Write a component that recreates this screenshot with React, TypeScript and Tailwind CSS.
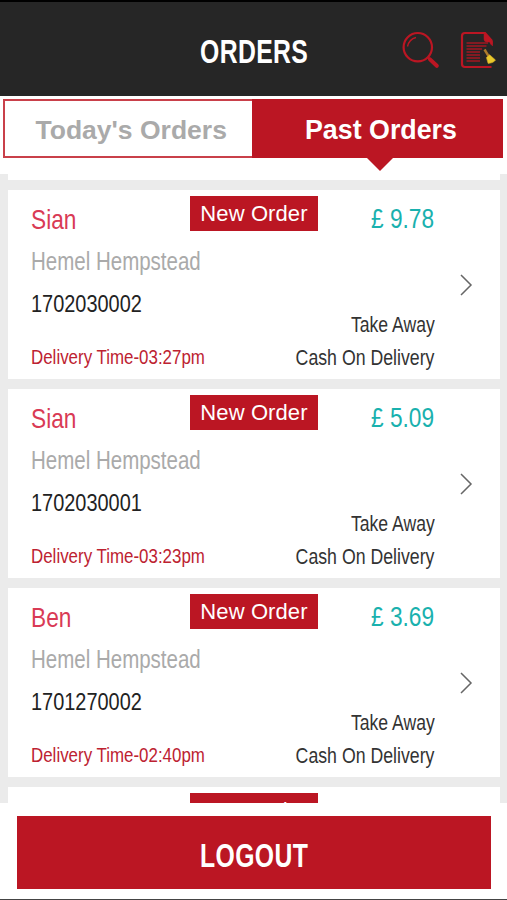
type Order = { id: string; name: string; town: string; price: string; time: string };

const orders: Order[] = [
  { id: "1702030002", name: "Sian", town: "Hemel Hempstead", price: "£ 9.78", time: "03:27pm" },
  { id: "1702030001", name: "Sian", town: "Hemel Hempstead", price: "£ 5.09", time: "03:23pm" },
  { id: "1701270002", name: "Ben", town: "Hemel Hempstead", price: "£ 3.69", time: "02:40pm" },
];

function SearchIcon() {
  return (
    <svg width="38" height="39" viewBox="0 0 38 39" fill="none" stroke="#bb1623">
      <circle cx="15.8" cy="17.2" r="14.2" strokeWidth="2.2" />
      <path d="M5.5 16.5C6.5 12 9.5 8.6 14 7.5" strokeWidth="1.4" />
      <path d="M25.5 27l2.5 2.3" strokeWidth="2.2" />
      <path d="M28 29.4l6.8 6.4" strokeWidth="4" strokeLinecap="round" />
    </svg>
  );
}

function ClearListIcon() {
  return (
    <svg width="36" height="39" viewBox="0 0 36 39" fill="none" stroke="#bb1623">
      <path d="M31.5 37H5a3 3 0 0 1-3-3V6a3 3 0 0 1 3-3h20l6.500 7.500v4" strokeWidth="2.2" />
      <path d="M24 3v6a3 3 0 0 0 3 3h2.500l3 4V11.500L25.500 3z" fill="#bb1623" strokeWidth="0.5" />
      <path d="M6.500 13h21.500M6.500 16h20M6.500 19h15.500M6.500 22h13.500M6.500 25h13.500M6.500 28h13.500M6.500 31h13.500" stroke="#a31722" strokeWidth="1.5" />
      <path d="M24.500 19.500l4 6.500" stroke="#ad7c2b" strokeWidth="2.400" />
      <path d="M26.400 27.500l3.200-2.800 5.900 5.300c-1.600 2.200-4 3.200-7.400 3.400z" fill="#e8c92c" stroke="#d1a823" strokeWidth="0.600" />
    </svg>
  );
}

function Badge() {
  return (
    <div className="mt-[6px] h-[35px] w-[128px] shrink-0 bg-[#bb1623] text-center text-[22px] leading-[36px] tracking-[0.1px] whitespace-nowrap text-white">
      New Order
    </div>
  );
}

function OrderCard({ order }: { order: Order }) {
  return (
    <article className="flex h-[189px] shrink-0 bg-white pl-[23px] whitespace-nowrap">
      <div className="flex w-[159px] shrink-0 flex-col items-start pt-[9.5px]">
        <h2 className="origin-left scale-x-[0.81] text-[28px] leading-10 text-[#d93a55]">{order.name}</h2>
        <p className="origin-left scale-x-[0.82] text-[25px] leading-[42px] text-[#aaaaaa]">{order.town}</p>
        <p className="origin-left scale-x-[0.83] text-[24px] leading-[44px] text-[#222222]">{order.id}</p>
        <p className="mt-[19px] origin-left scale-x-[0.825] text-[20.5px] leading-6 text-[#bd2231]">Delivery Time-{order.time}</p>
      </div>
      <Badge />
      <div className="flex w-[117px] shrink-0 flex-col items-end pt-[9px]">
        <p className="mr-px origin-right scale-x-[0.84] text-[27px] leading-10 text-[#19b1ae]">{order.price}</p>
        <p className="mt-[69px] origin-right scale-x-[0.8] text-[22px] leading-[33px] text-[#333333]">Take Away</p>
        <p className="mr-px origin-right scale-x-[0.805] text-[22px] leading-[33px] text-[#333333]">Cash On Delivery</p>
      </div>
      <svg className="mt-[84px] ml-[24px]" width="14" height="22" viewBox="0 0 14 22" fill="none" stroke="#666666" strokeWidth="1.5">
        <path d="M2 1l10 10L2 21" />
      </svg>
    </article>
  );
}

export default function App() {
  return (
    <div className="flex h-[900px] w-[507px] flex-col overflow-hidden bg-white font-['Liberation_Sans',Arial,sans-serif]">
      <header className="flex h-24 shrink-0 items-start border-t-2 border-black bg-[#262626]">
        <div className="w-[402px] shrink-0 pt-[30px] pl-[106px] text-center">
          <h1 className="inline-block scale-x-[0.75] text-[33px] leading-10 font-bold tracking-[0.5px] text-white">ORDERS</h1>
        </div>
        <div className="flex gap-[20px] pt-[28px]">
          <SearchIcon />
          <ClearListIcon />
        </div>
      </header>

      <nav className="flex h-[78px] shrink-0 px-[3px] pt-[3px] whitespace-nowrap">
        <div className="h-[59px] w-[249px] border-2 border-r-0 border-[#c9404a] pl-[30.5px] text-[26.5px] leading-[59px] font-bold text-[#aaaaaa]">
          Today's Orders
        </div>
        <div className="flex h-[72px] w-[251px] flex-col">
          <div className="h-[59px] bg-[#bb1623] pl-[53px] text-[26.8px] leading-[63px] font-bold text-white">Past Orders</div>
          <svg className="ml-[115px]" width="26" height="13" viewBox="0 0 26 13">
            <path d="M0 0h26L13 13z" fill="#bb1623" />
          </svg>
        </div>
      </nav>

      <main className="flex h-[629px] shrink-0 flex-col gap-[10px] overflow-hidden bg-[#ebebeb] pr-[7.5px] pl-2">
        <div className="h-[6px] shrink-0 bg-white" />
        {orders.map((order) => (
          <OrderCard key={order.id} order={order} />
        ))}
        <article className="flex h-[189px] shrink-0 bg-white pl-[182px]">
          <Badge />
        </article>
      </main>

      <footer className="flex flex-1 flex-col border-b border-[#444444] pt-[13px] pr-4 pl-[17px]">
        <button className="h-[73px] bg-[#bb1623] text-white">
          <span className="inline-block scale-x-[0.75] pt-[7px] text-[33px] leading-10 font-bold tracking-[0.5px]">LOGOUT</span>
        </button>
      </footer>
    </div>
  );
}
